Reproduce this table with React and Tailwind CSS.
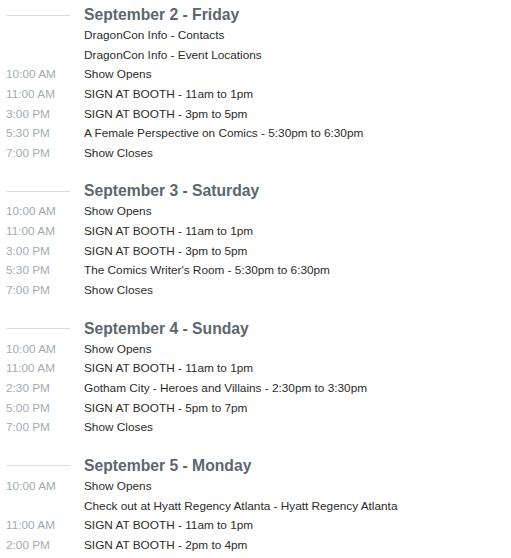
const days = [
  {
    title: "September 2 - Friday",
    items: [
      ["", "DragonCon Info - Contacts"],
      ["", "DragonCon Info - Event Locations"],
      ["10:00 AM", "Show Opens"],
      ["11:00 AM", "SIGN AT BOOTH - 11am to 1pm"],
      ["3:00 PM", "SIGN AT BOOTH - 3pm to 5pm"],
      ["5:30 PM", "A Female Perspective on Comics - 5:30pm to 6:30pm"],
      ["7:00 PM", "Show Closes"],
    ],
  },
  {
    title: "September 3 - Saturday",
    items: [
      ["10:00 AM", "Show Opens"],
      ["11:00 AM", "SIGN AT BOOTH - 11am to 1pm"],
      ["3:00 PM", "SIGN AT BOOTH - 3pm to 5pm"],
      ["5:30 PM", "The Comics Writer's Room - 5:30pm to 6:30pm"],
      ["7:00 PM", "Show Closes"],
    ],
  },
  {
    title: "September 4 - Sunday",
    items: [
      ["10:00 AM", "Show Opens"],
      ["11:00 AM", "SIGN AT BOOTH - 11am to 1pm"],
      ["2:30 PM", "Gotham City - Heroes and Villains - 2:30pm to 3:30pm"],
      ["5:00 PM", "SIGN AT BOOTH - 5pm to 7pm"],
      ["7:00 PM", "Show Closes"],
    ],
  },
  {
    title: "September 5 - Monday",
    items: [
      ["10:00 AM", "Show Opens"],
      ["", "Check out at Hyatt Regency Atlanta - Hyatt Regency Atlanta"],
      ["11:00 AM", "SIGN AT BOOTH - 11am to 1pm"],
      ["2:00 PM", "SIGN AT BOOTH - 2pm to 4pm"],
    ],
  },
];

const Day = ({ title, items }) => (
  <section className="mb-[18px]">
    {/* heading with rule */}
    <div className="flex h-[20px] items-center">
      <div className="w-[78px] shrink-0 pr-[14px]">
        <div className="h-px w-[64px] bg-[#dcdfe2]" />
      </div>
      <h2 className="text-[15.7px] font-bold leading-[20px] text-[#5b6770]">{title}</h2>
    </div>
    <div className="mt-px">
      {items.map(([time, text], i) => (
        <div key={i} className="flex h-[19.65px] items-center text-[11.8px] leading-[19.65px]">
          <span className="w-[78px] shrink-0 text-[#a3abb2]">{time}</span>
          <span className="text-[#2b2b2b]">{text}</span>
        </div>
      ))}
    </div>
  </section>
);

export default function App() {
  return (
    <div
      className="min-h-screen bg-white pl-[6px] pt-[5px]"
      style={{ fontFamily: '"Liberation Sans", Arial, sans-serif' }}
    >
      {days.map((d) => (
        <Day key={d.title} {...d} />
      ))}
    </div>
  );
}
